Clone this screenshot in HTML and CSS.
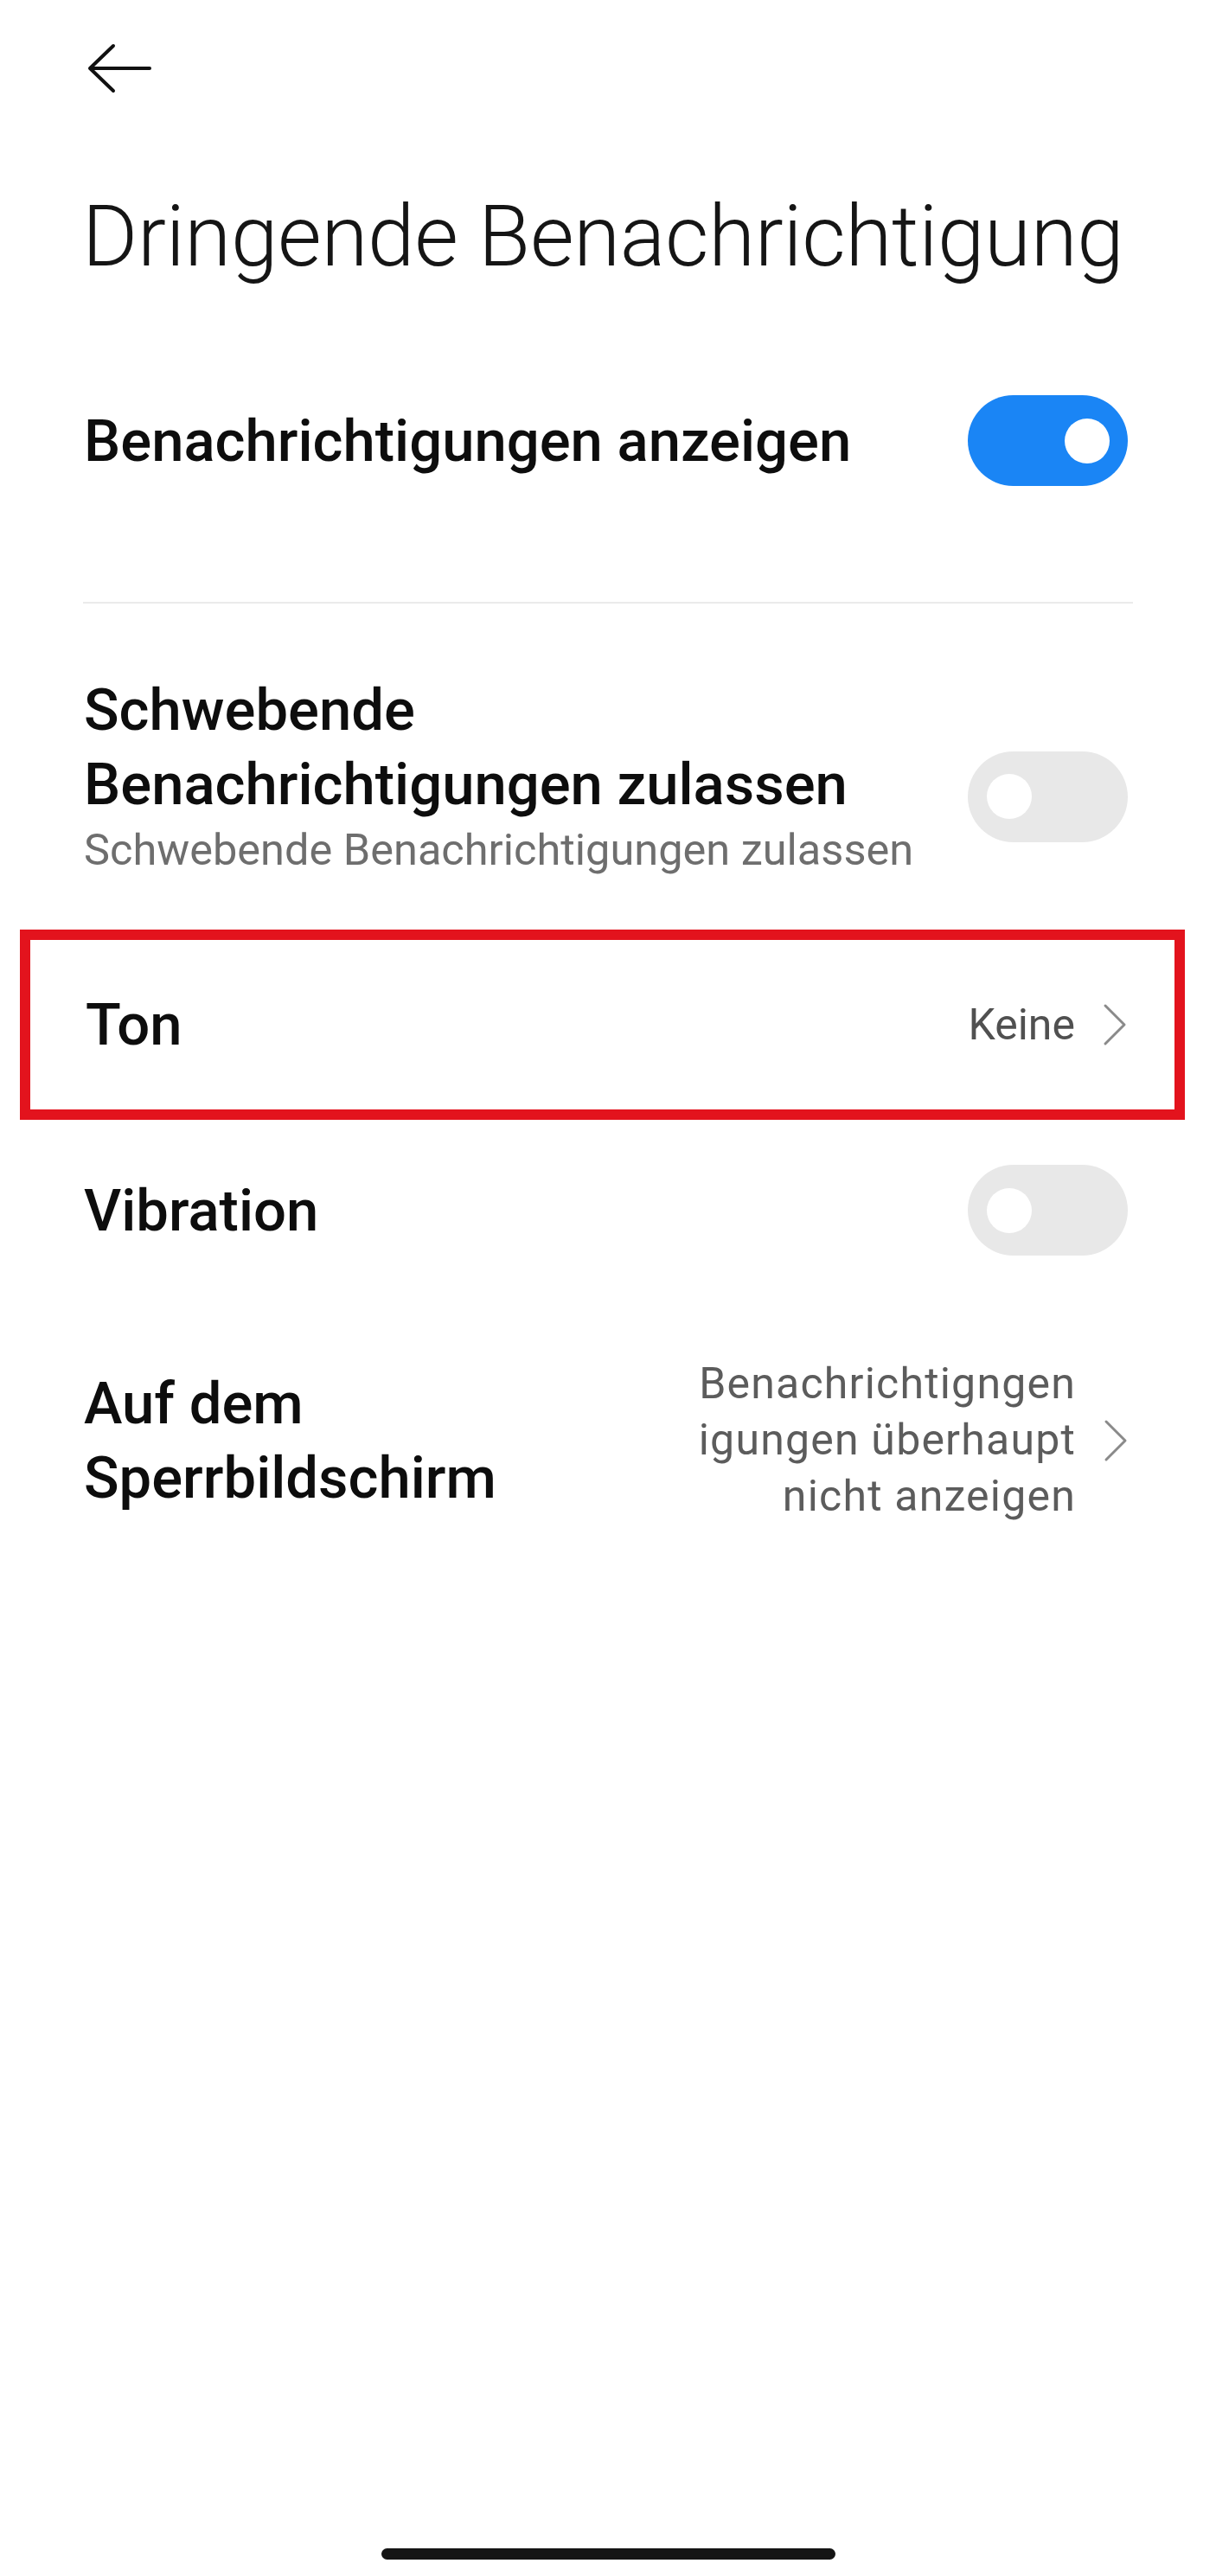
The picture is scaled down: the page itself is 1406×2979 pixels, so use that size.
FILE: index.html
```html
<!DOCTYPE html>
<html lang="de">
<head>
  <meta charset="UTF-8">
  <meta name="viewport" content="width=device-width, initial-scale=1.0">
  <title>Dringende Benachrichtigung</title>
  <link rel="stylesheet" href="styles.css">
</head>
<body>
  <div class="screen">
    <!-- Kopfzeile -->
    <header class="top-bar">
      <svg class="back" width="76" height="58" viewBox="0 0 76 58" fill="none" stroke="#111" stroke-width="4" stroke-linecap="round" stroke-linejoin="round">
        <path d="M5 29 H73"/>
        <path d="M31 3 L4 29 L31 55"/>
      </svg>
    </header>
    <h1 class="page-title">Dringende Benachrichtigung</h1>

    <!-- Einstellungen -->
    <div class="row row-first">
      <div class="row-text">
        <div class="label">Benachrichtigungen anzeigen</div>
      </div>
      <span class="switch on"><span class="knob"></span></span>
    </div>

    <div class="divider"></div>

    <div class="row row-float">
      <div class="row-text">
        <div class="label label-narrow">Schwebende Benachrichtigungen zulassen</div>
        <div class="summary">Schwebende Benachrichtigungen zulassen</div>
      </div>
      <span class="switch switch-low"><span class="knob"></span></span>
    </div>

    <div class="highlight">
      <div class="row row-tone">
        <div class="row-text">
          <div class="label">Ton</div>
        </div>
        <div class="value">Keine</div>
        <svg class="chevron" width="28" height="50" viewBox="0 0 28 50" fill="none" stroke="#8a8a8a" stroke-width="3" stroke-linecap="round" stroke-linejoin="round">
          <path d="M3 3 L25 25 L3 47"/>
        </svg>
      </div>
    </div>

    <div class="row row-vibration">
      <div class="row-text">
        <div class="label">Vibration</div>
      </div>
      <span class="switch"><span class="knob"></span></span>
    </div>

    <div class="row row-lock">
      <div class="row-text">
        <div class="label">Auf dem Sperrbildschirm</div>
      </div>
      <div class="value value-multi">Benachrichtigngen<br>igungen überhaupt<br>nicht anzeigen</div>
      <svg class="chevron" width="28" height="50" viewBox="0 0 28 50" fill="none" stroke="#8a8a8a" stroke-width="3" stroke-linecap="round" stroke-linejoin="round">
        <path d="M3 3 L25 25 L3 47"/>
      </svg>
    </div>

    <div class="home-bar"></div>
  </div>
</body>
</html>
```

FILE: styles.css
```css
body {
  margin: 0;
  background: #fff;
  font-family: Roboto, "Noto Sans", "Liberation Sans", sans-serif;
  color: #0d0d0d;
}
.screen {
  min-height: 2979px;
  display: flex;
  flex-direction: column;
}
.top-bar {
  padding: 50px 0 0 100px;
  height: 58px;
}
.back {
  display: block;
}
.page-title {
  margin: 106px 0 0 95px;
  font-size: 98px;
  font-weight: 300;
  line-height: 120px;
  letter-spacing: -0.3px;
  color: #151515;
}

/* Zeilen */
.row {
  display: flex;
  align-items: center;
  padding: 0 102px 0 97px;
}
.row-text {
  flex: 1;
  min-width: 0;
}
.label {
  font-size: 67px;
  font-weight: 500;
  line-height: 86px;
}
.label-narrow {
  max-width: 930px;
}
.summary {
  font-size: 50.5px;
  line-height: 66px;
  color: #6e6e6e;
  white-space: nowrap;
}
.value {
  font-size: 50px;
  line-height: 66px;
  color: #505050;
  margin-right: 32px;
}
.value-multi {
  text-align: right;
  line-height: 65px;
  letter-spacing: 1.2px;
  color: #5c5c5c;
}
.chevron {
  display: block;
  flex-shrink: 0;
}

.row-first {
  padding-top: 123px;
  padding-bottom: 134px;
}
.divider {
  height: 2px;
  margin: 0 96px;
  background: #ebebeb;
}
.row-float {
  padding-top: 80px;
  padding-bottom: 59px;
}
.highlight {
  margin: 0 36px 0 23px;
  border: 12px solid #e3131d;
}
.row-tone {
  min-height: 196px;
  padding: 0 55px 0 64px;
}
.row-vibration {
  padding-top: 52px;
}
.row-lock {
  padding-top: 116px;
}

/* Schalter */
.switch {
  flex-shrink: 0;
  width: 185px;
  height: 105px;
  border-radius: 53px;
  background: #e8e8e8;
  display: flex;
  align-items: center;
  padding: 0 22px;
  box-sizing: border-box;
}
.switch .knob {
  width: 52px;
  height: 52px;
  border-radius: 50%;
  background: #fff;
}
.switch.on {
  background: #1a85f5;
  justify-content: flex-end;
  padding: 0 21px;
}
.switch-low {
  margin-top: 48px;
}

.home-bar {
  width: 525px;
  height: 13px;
  border-radius: 7px;
  background: #151515;
  margin: auto auto 19px;
}
```
